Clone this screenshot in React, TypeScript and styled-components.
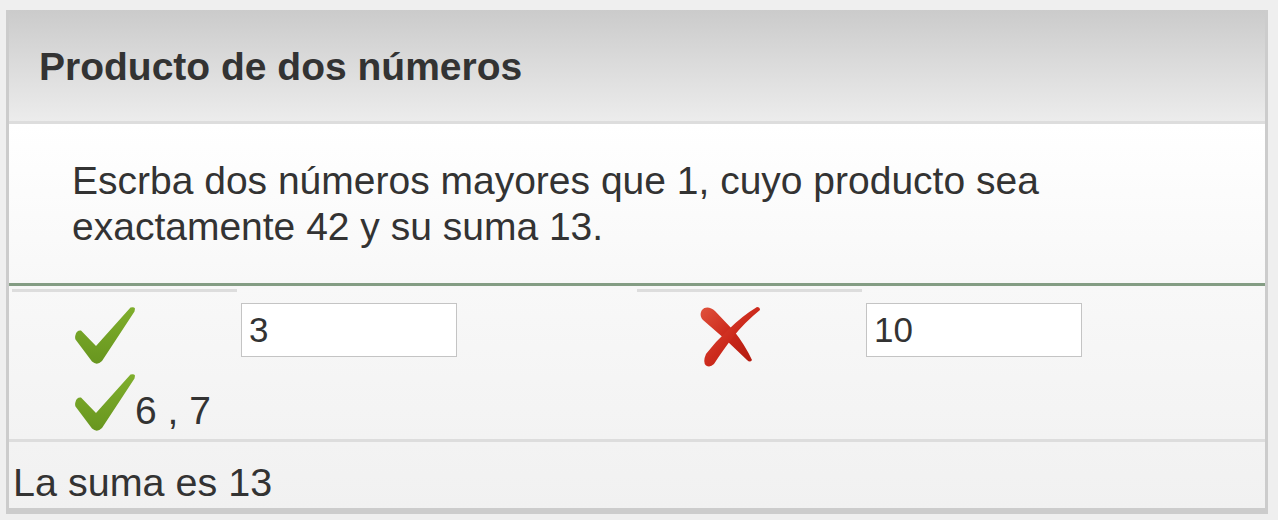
import React from "react";
import styled, { createGlobalStyle } from "styled-components";

const GlobalStyle = createGlobalStyle`
  html, body {
    margin: 0;
    padding: 0;
    background: #efefef;
  }
  body {
    font-family: "Liberation Sans", Arial, Helvetica, sans-serif;
    color: #333333;
  }
  * { box-sizing: border-box; }
`;

const Frame = styled.div`
  margin: 10px 10px 0 6px;
  border: 3px solid #cccccc;
  border-top: 0;
  background: #f5f5f5;
`;

const Header = styled.div`
  height: 114px;
  padding: 3px 0 0 30px;
  display: flex;
  align-items: center;
  border-bottom: 3px solid #dddddd;
  background: linear-gradient(to bottom, #cbcbcb 0%, #ececec 100%);
`;

const Title = styled.h1`
  margin: 0;
  font-size: 39px;
  font-weight: 700;
  line-height: normal;
  color: #333333;
`;

const Question = styled.div`
  height: 162px;
  padding: 34px 60px 0 63px;
  font-size: 39px;
  line-height: 46px;
  background: linear-gradient(to bottom, #ffffff 0%, #f8f8f8 100%);
  border-bottom: 3px solid #849d84;
`;

const Answers = styled.div`
  height: 156px;
  padding: 3px 3px 0 3px;
  display: grid;
  grid-template-columns: 225px 400px 225px 400px;
  align-items: start;
  border-bottom: 3px solid #dddddd;
  background: linear-gradient(to bottom, #f8f8f8 0%, #f3f3f3 100%);
`;

const FeedbackCell = styled.div`
  border-top: 3px solid #dddddd;
  padding: 15px 0 0 63px;
  display: flex;
  flex-direction: column;
  align-items: flex-start;
`;

const InputCell = styled.div`
  padding: 14px 0 0 4px;
`;

const AnswerInput = styled.input`
  width: 216px;
  height: 54px;
  margin: 0;
  padding: 0 7px;
  border: 1px solid #c4c4c4;
  border-radius: 0;
  background: #ffffff;
  font-family: "Liberation Sans", Arial, Helvetica, sans-serif;
  font-size: 35px;
  color: #333333;
  outline: none;
`;

const SolutionRow = styled.div`
  margin-top: 10px;
  display: flex;
  align-items: flex-end;
`;

const SolutionText = styled.span`
  font-size: 39px;
  line-height: normal;
  margin-bottom: -2px;
  white-space: pre;
`;

const IconBox = styled.svg<{ $w: number; $h: number }>`
  display: block;
  flex: none;
  width: ${(p) => p.$w}px;
  height: ${(p) => p.$h}px;
`;

const Footer = styled.div`
  height: 69px;
  padding: 18px 0 0 4px;
  font-size: 39.5px;
  line-height: normal;
  border-bottom: 3px solid #cccccc;
  background: linear-gradient(to bottom, #f3f3f3 0%, #f1f1f1 100%);
`;

const CheckIcon: React.FC<{ id: string }> = ({ id }) => (
  <IconBox $w={60} $h={57} viewBox="0 0 60 57" aria-hidden="true">
    <defs>
      <linearGradient id={id} x1="0" y1="0" x2="0" y2="1">
        <stop offset="0" stopColor="#7fae2c" />
        <stop offset="1" stopColor="#68961f" />
      </linearGradient>
    </defs>
    <path
      d="M0.5,28 Q1.5,23 6,23.5 L21,39 L55.5,0.5 Q59,-0.5 60,1.5 L59.5,4.5 L27,54 Q22,59 17,54.5 L0.5,32.5 Q-0.3,30 0.5,28 Z"
      fill={`url(#${id})`}
    />
  </IconBox>
);

const CrossIcon: React.FC = () => (
  <IconBox $w={60} $h={60} viewBox="0 0 60 60" aria-hidden="true">
    <defs>
      <linearGradient id="xgrad" x1="0" y1="0" x2="1" y2="1">
        <stop offset="0" stopColor="#e0523c" />
        <stop offset="0.5" stopColor="#cc2a1c" />
        <stop offset="1" stopColor="#b31b10" />
      </linearGradient>
    </defs>
    <path
      d="M2,3 C5,-1 11,0 15,4 L34,24 Q45,38 52,53 Q50,56 47,53 L26,33 L3,13 C0,10 0,6 2,3 Z"
      fill="url(#xgrad)"
    />
    <path
      d="M57,0 Q60,0 60,3 Q45,15 33,30 Q21,46 14,57 Q10,61 6,58.5 Q2.5,55 6,47 Q16,34 28,23 Q42,9 57,0 Z"
      fill="url(#xgrad)"
    />
  </IconBox>
);

export default function App() {
  return (
    <>
      <GlobalStyle />
      <Frame>
        <Header>
          <Title>Producto de dos números</Title>
        </Header>
        <Question>
          Escrba dos números mayores que 1, cuyo producto sea exactamente 42 y su suma 13.
        </Question>
        <Answers>
          <FeedbackCell>
            <CheckIcon id="check-a" />
            <SolutionRow>
              <CheckIcon id="check-b" />
              <SolutionText>6 , 7</SolutionText>
            </SolutionRow>
          </FeedbackCell>
          <InputCell>
            <AnswerInput type="text" value="3" readOnly />
          </InputCell>
          <FeedbackCell>
            <CrossIcon />
          </FeedbackCell>
          <InputCell>
            <AnswerInput type="text" value="10" readOnly />
          </InputCell>
        </Answers>
        <Footer>La suma es 13</Footer>
      </Frame>
    </>
  );
}
